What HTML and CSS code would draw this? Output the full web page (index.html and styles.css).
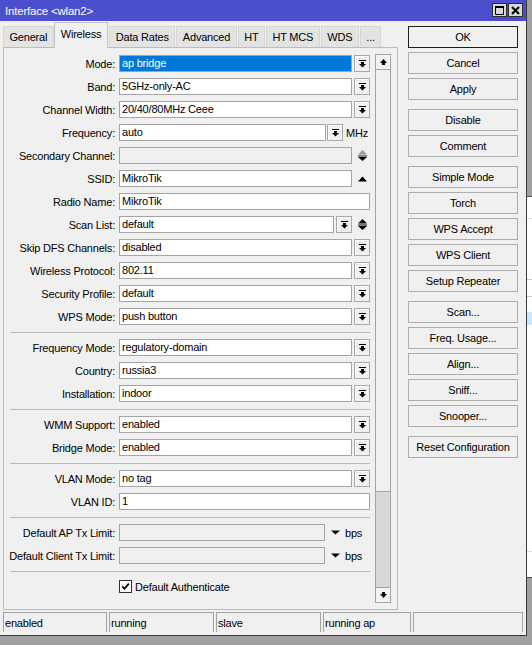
FILE: index.html
```html
<!DOCTYPE html>
<html>
<head>
<meta charset="utf-8">
<link rel="stylesheet" href="styles.css">
</head>
<body>
<div class="desk">
  <div class="win">
    <div class="titlebar">
      <span class="title">Interface &lt;wlan2&gt;</span>
      <div class="tbtns">
        <span class="tbtn"><svg width="9" height="9" viewBox="0 0 9 9"><path d="M0.5 0.5H8.5V8.5H0.5Z" fill="none" stroke="#000" stroke-width="1"/><rect x="0" y="0" width="9" height="2" fill="#000"/></svg></span>
        <span class="tbtn"><svg width="9" height="9" viewBox="0 0 9 9"><path d="M1 1L8 8M8 1L1 8" stroke="#000" stroke-width="2"/></svg></span>
      </div>
    </div>
    <div class="main">
      <div class="left">
        <div class="tabs">
          <div class="tab">General</div>
          <div class="tab active">Wireless</div>
          <div class="tab">Data Rates</div>
          <div class="tab">Advanced</div>
          <div class="tab">HT</div>
          <div class="tab">HT MCS</div>
          <div class="tab">WDS</div>
          <div class="tab">...</div>
        </div>
        <div class="panel">
          <div class="form">
            <div class="row"><span class="lbl">Mode:</span><span class="inp w233 sel">ap bridge</span><span class="dd"><svg class="ddg" width="7" height="8" viewBox="0 0 7 8"><rect x="0" y="0" width="7" height="1"/><rect x="2" y="2" width="3" height="2"/><path d="M0 4H7L3.5 7.5Z"/></svg></span></div>
            <div class="row"><span class="lbl">Band:</span><span class="inp w233">5GHz-only-AC</span><span class="dd"><svg class="ddg" width="7" height="8" viewBox="0 0 7 8"><rect x="0" y="0" width="7" height="1"/><rect x="2" y="2" width="3" height="2"/><path d="M0 4H7L3.5 7.5Z"/></svg></span></div>
            <div class="row"><span class="lbl">Channel Width:</span><span class="inp w233">20/40/80MHz Ceee</span><span class="dd"><svg class="ddg" width="7" height="8" viewBox="0 0 7 8"><rect x="0" y="0" width="7" height="1"/><rect x="2" y="2" width="3" height="2"/><path d="M0 4H7L3.5 7.5Z"/></svg></span></div>
            <div class="row"><span class="lbl">Frequency:</span><span class="inp w207">auto</span><span class="dd dd1"><svg class="ddg" width="7" height="8" viewBox="0 0 7 8"><rect x="0" y="0" width="7" height="1"/><rect x="2" y="2" width="3" height="2"/><path d="M0 4H7L3.5 7.5Z"/></svg></span><span class="unit">MHz</span></div>
            <div class="row"><span class="lbl">Secondary Channel:</span><span class="inp w233 dis"></span><span class="ud"><svg width="9" height="11" viewBox="0 0 9 11"><path d="M0 4.5L4.5 0L9 4.5Z" fill="#9a9a9a"/><rect x="0" y="5.5" width="9" height="1" fill="#222"/><path d="M0 7H9L4.5 11Z" fill="#000"/></svg></span></div>
            <div class="row"><span class="lbl">SSID:</span><span class="inp w233">MikroTik</span><span class="ud"><svg width="9" height="6" viewBox="0 0 9 6"><path d="M0 5.5L4.5 0.5L9 5.5Z" fill="#000"/></svg></span></div>
            <div class="row"><span class="lbl">Radio Name:</span><span class="inp w251">MikroTik</span></div>
            <div class="row"><span class="lbl">Scan List:</span><span class="inp w215">default</span><span class="dd"><svg class="ddg" width="7" height="8" viewBox="0 0 7 8"><rect x="0" y="0" width="7" height="1"/><rect x="2" y="2" width="3" height="2"/><path d="M0 4H7L3.5 7.5Z"/></svg></span><span class="ud"><svg width="9" height="11" viewBox="0 0 9 11"><path d="M0 4.5L4.5 0L9 4.5Z" fill="#000"/><rect x="0" y="5.5" width="9" height="1" fill="#000"/><path d="M0 7H9L4.5 11Z" fill="#000"/></svg></span></div>
            <div class="row"><span class="lbl">Skip DFS Channels:</span><span class="inp w233">disabled</span><span class="dd"><svg class="ddg" width="7" height="8" viewBox="0 0 7 8"><rect x="0" y="0" width="7" height="1"/><rect x="2" y="2" width="3" height="2"/><path d="M0 4H7L3.5 7.5Z"/></svg></span></div>
            <div class="row"><span class="lbl">Wireless Protocol:</span><span class="inp w233">802.11</span><span class="dd"><svg class="ddg" width="7" height="8" viewBox="0 0 7 8"><rect x="0" y="0" width="7" height="1"/><rect x="2" y="2" width="3" height="2"/><path d="M0 4H7L3.5 7.5Z"/></svg></span></div>
            <div class="row"><span class="lbl">Security Profile:</span><span class="inp w233">default</span><span class="dd"><svg class="ddg" width="7" height="8" viewBox="0 0 7 8"><rect x="0" y="0" width="7" height="1"/><rect x="2" y="2" width="3" height="2"/><path d="M0 4H7L3.5 7.5Z"/></svg></span></div>
            <div class="row"><span class="lbl">WPS Mode:</span><span class="inp w233">push button</span><span class="dd"><svg class="ddg" width="7" height="8" viewBox="0 0 7 8"><rect x="0" y="0" width="7" height="1"/><rect x="2" y="2" width="3" height="2"/><path d="M0 4H7L3.5 7.5Z"/></svg></span></div>
            <div class="sep"></div>
            <div class="row"><span class="lbl">Frequency Mode:</span><span class="inp w233">regulatory-domain</span><span class="dd"><svg class="ddg" width="7" height="8" viewBox="0 0 7 8"><rect x="0" y="0" width="7" height="1"/><rect x="2" y="2" width="3" height="2"/><path d="M0 4H7L3.5 7.5Z"/></svg></span></div>
            <div class="row"><span class="lbl">Country:</span><span class="inp w233">russia3</span><span class="dd"><svg class="ddg" width="7" height="8" viewBox="0 0 7 8"><rect x="0" y="0" width="7" height="1"/><rect x="2" y="2" width="3" height="2"/><path d="M0 4H7L3.5 7.5Z"/></svg></span></div>
            <div class="row"><span class="lbl">Installation:</span><span class="inp w233">indoor</span><span class="dd"><svg class="ddg" width="7" height="8" viewBox="0 0 7 8"><rect x="0" y="0" width="7" height="1"/><rect x="2" y="2" width="3" height="2"/><path d="M0 4H7L3.5 7.5Z"/></svg></span></div>
            <div class="sep"></div>
            <div class="row"><span class="lbl">WMM Support:</span><span class="inp w233">enabled</span><span class="dd"><svg class="ddg" width="7" height="8" viewBox="0 0 7 8"><rect x="0" y="0" width="7" height="1"/><rect x="2" y="2" width="3" height="2"/><path d="M0 4H7L3.5 7.5Z"/></svg></span></div>
            <div class="row"><span class="lbl">Bridge Mode:</span><span class="inp w233">enabled</span><span class="dd"><svg class="ddg" width="7" height="8" viewBox="0 0 7 8"><rect x="0" y="0" width="7" height="1"/><rect x="2" y="2" width="3" height="2"/><path d="M0 4H7L3.5 7.5Z"/></svg></span></div>
            <div class="sep"></div>
            <div class="row"><span class="lbl">VLAN Mode:</span><span class="inp w233">no tag</span><span class="dd"><svg class="ddg" width="7" height="8" viewBox="0 0 7 8"><rect x="0" y="0" width="7" height="1"/><rect x="2" y="2" width="3" height="2"/><path d="M0 4H7L3.5 7.5Z"/></svg></span></div>
            <div class="row"><span class="lbl">VLAN ID:</span><span class="inp w251">1</span></div>
            <div class="sep"></div>
            <div class="row"><span class="lbl">Default AP Tx Limit:</span><span class="inp w206 dis"></span><span class="tri"><svg width="9" height="5" viewBox="0 0 9 5"><path d="M0 0.5H9L4.5 4.5Z" fill="#000"/></svg></span><span class="unit u2">bps</span></div>
            <div class="row"><span class="lbl">Default Client Tx Limit:</span><span class="inp w206 dis"></span><span class="tri"><svg width="9" height="5" viewBox="0 0 9 5"><path d="M0 0.5H9L4.5 4.5Z" fill="#000"/></svg></span><span class="unit u2">bps</span></div>
            <div class="sep"></div>
            <div class="row"><span class="chk"><svg width="9" height="9" viewBox="0 0 9 9"><path d="M1.2 4.3L3.5 6.8L7.8 1.6" fill="none" stroke="#000" stroke-width="1.7"/></svg></span><span class="chktxt">Default Authenticate</span></div>
          </div>
          <div class="scroll">
            <div class="sbtn"><svg width="7" height="6" viewBox="0 0 7 6"><path d="M0 4L3.5 0L7 4Z" fill="#000"/><rect x="2" y="4" width="3" height="2" fill="#000"/></svg></div>
            <div class="thumb"></div>
            <div class="track"></div>
            <div class="sbtn sdown"><svg width="7" height="6" viewBox="0 0 7 6"><rect x="2" y="0" width="3" height="2" fill="#000"/><path d="M0 2H7L3.5 6Z" fill="#000"/></svg></div>
          </div>
        </div>
      </div>
      <div class="btns">
        <div class="btn def">OK</div>
        <div class="btn">Cancel</div>
        <div class="btn">Apply</div>
        <div class="btn grp">Disable</div>
        <div class="btn">Comment</div>
        <div class="btn grp">Simple Mode</div>
        <div class="btn">Torch</div>
        <div class="btn">WPS Accept</div>
        <div class="btn">WPS Client</div>
        <div class="btn">Setup Repeater</div>
        <div class="btn grp">Scan...</div>
        <div class="btn">Freq. Usage...</div>
        <div class="btn">Align...</div>
        <div class="btn">Sniff...</div>
        <div class="btn">Snooper...</div>
        <div class="btn grp">Reset Configuration</div>
      </div>
    </div>
    <div class="status">
      <div class="cell s1">enabled</div>
      <div class="cell s2">running</div>
      <div class="cell s2">slave</div>
      <div class="cell s4">running ap</div>
      <div class="cell s5"></div>
    </div>
  </div>
  <div class="strip">
    <div class="g1"></div>
    <div class="ld"></div>
    <div class="wa"></div>
    <div class="ll"></div>
    <div class="wb"></div>
    <div class="lm"></div>
    <div class="wc"></div>
    <div class="lm"></div>
    <div class="wd"></div>
    <div class="bl"></div>
    <div class="we"></div>
    <div class="ll"></div>
    <div class="wf"></div>
    <div class="ld"></div>
  </div>
</div>
</body>
</html>
```
FILE: styles.css
```css
* { box-sizing: border-box; }
html, body { margin: 0; padding: 0; }
body {
  width: 532px;
  height: 645px;
  overflow: hidden;
  background: #a0a0a0;
  font-family: "Liberation Sans", Arial, sans-serif;
  font-size: 11px;
  letter-spacing: -0.2px;
  color: #000;
}
.desk { display: flex; align-items: flex-start; }
.win {
  width: 527px;
  height: 636px;
  flex-shrink: 0;
  background: #f0f0f0;
  border-right: 1px solid #3a3a3a;
  border-bottom: 1px solid #3a3a3a;
  display: flex;
  flex-direction: column;
}
.titlebar {
  height: 21px;
  background: #4b4fcd;
  display: flex;
  align-items: center;
  padding: 0 3px 0 5px;
}
.title { color: #fff; font-size: 11.5px; flex: 1; }
.tbtns { display: flex; gap: 1px; align-self: flex-start; margin-top: 3px; }
.tbtn {
  width: 15px;
  height: 14px;
  border: 1px solid #2e2e2e;
  background: #d9d9d9;
  display: flex;
  align-items: center;
  justify-content: center;
}
.main { display: flex; height: 591px; }
.left { width: 398px; display: flex; flex-direction: column; padding-top: 1px; }
.tabs { display: flex; align-items: flex-end; height: 25px; padding-left: 3px; }
.tab {
  height: 21px;
  padding: 0 5.5px;
  margin-right: 1px;
  border: 1px solid #d6d6d6;
  border-bottom: none;
  background: #e3e3e3;
  display: flex;
  align-items: center;
  white-space: nowrap;
}
.tab.active {
  height: 26px;
  margin-left: -1px;
  margin-bottom: -1px;
  padding: 0 6px 3px;
  background: #f0f0f0;
  border-color: #c4c4c4;
  position: relative;
  z-index: 1;
}
.panel {
  margin-left: 3px;
  width: 395px;
  height: 563px;
  border: 1px solid #bcbcbc;
  display: flex;
}
.form {
  width: 371px;
  padding-top: 7px;
  display: flex;
  flex-direction: column;
  gap: 6px;
}
.row { display: flex; align-items: center; height: 17px; }
.lbl { width: 111px; margin-right: 4px; text-align: right; white-space: nowrap; }
.inp {
  height: 17px;
  border: 1px solid #a4a4a4;
  background: #fff;
  padding: 0 2px;
  line-height: 15px;
  white-space: nowrap;
  overflow: hidden;
}
.w233 { width: 233px; }
.w251 { width: 251px; }
.w207 { width: 207px; }
.w215 { width: 215px; }
.w206 { width: 206px; }
.dis { background: #f0f0f0; }
.sel { background: #0078d7; color: #fff; }
.dd {
  width: 16px;
  height: 17px;
  margin-left: 2px;
  border: 1px solid #a8a8a8;
  background: #f0f0f0;
  box-shadow: inset 1px 1px 0 #fff;
  display: flex;
  align-items: center;
  justify-content: center;
}
.dd1 { margin-left: 1px; }
.ddg { fill: #000; }
.ud { margin-left: 6px; width: 9px; display: flex; align-items: center; }
.unit { margin-left: 3px; }
.u2 { margin-left: 5px; }
.tri { margin-left: 6px; width: 9px; display: flex; align-items: center; }
.sep {
  width: 360px;
  height: 0;
  margin: 1px 0 0 6px;
  border-top: 1px solid #b9b9b9;
}
.chk {
  width: 13px;
  height: 13px;
  margin-left: 115px;
  border: 1px solid #333;
  background: #fff;
  display: flex;
  align-items: center;
  justify-content: center;
}
.chktxt { margin-left: 3px; }
.scroll {
  width: 16px;
  height: 549px;
  margin-top: 6px;
  display: flex;
  flex-direction: column;
}
.sbtn {
  height: 16px;
  border: 1px solid #a3a3a3;
  background: #f3f3f3;
  display: flex;
  align-items: center;
  justify-content: center;
}
.sdown { height: 16px; }
.thumb {
  height: 422px;
  border: 1px solid #a3a3a3;
  border-top: none;
  background: #f0f0f0;
}
.track {
  height: 95px;
  border-left: 1px solid #a3a3a3;
  border-right: 1px solid #a3a3a3;
  background: #d7d7d7;
}
.btns {
  width: 110px;
  margin-left: 10px;
  margin-top: 5px;
  display: flex;
  flex-direction: column;
  gap: 4px;
}
.btn {
  height: 22px;
  border: 1px solid #adadad;
  background: #f0f0f0;
  display: flex;
  align-items: center;
  justify-content: center;
  white-space: nowrap;
}
.btn.def { border-color: #1e1e1e; }
.btn.grp { margin-top: 5px; }
.status { display: flex; height: 20px; padding-left: 3px; gap: 2px; }
.cell {
  border: 1px solid #a3a3a3;
  border-bottom: none;
  padding-left: 1px;
  display: flex;
  align-items: center;
  white-space: nowrap;
}
.s1 { width: 104px; }
.s2 { width: 105px; }
.s4 { width: 88px; }
.s5 { width: 110px; }
.strip { width: 5px; display: flex; flex-direction: column; }
.g1 { height: 196px; background: #a0a0a0; }
.ld { height: 1px; background: #505050; }
.ll { height: 1px; background: #dedede; }
.lm { height: 1px; background: #cdcdcd; }
.wa { height: 21px; background: #fff; }
.wb { height: 60px; background: #fff; }
.wc { height: 16px; background: #fff; }
.wd { height: 15px; background: #fff; }
.bl { height: 13px; background: #cce8ff; }
.we { height: 226px; background: #fff; }
.wf { height: 25px; background: #fff; }
```
